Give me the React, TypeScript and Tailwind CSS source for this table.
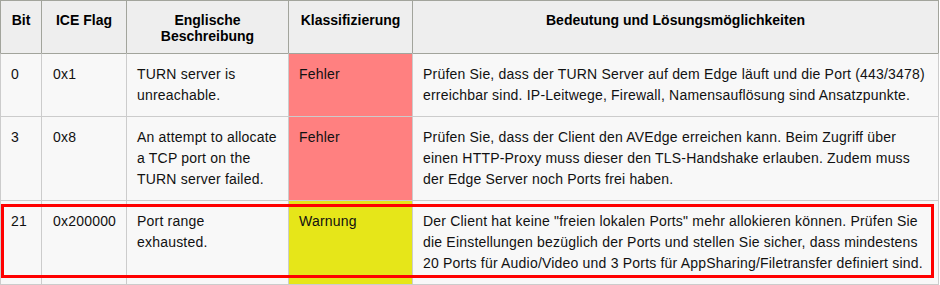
import React from "react";

const rows = [
  {
    bit: "0",
    flag: "0x1",
    en: "TURN server is unreachable.",
    cls: "Fehler",
    color: "bg-[#ff8080]",
    desc: "Prüfen Sie, dass der TURN Server auf dem Edge läuft und die Port (443/3478) erreichbar sind. IP-Leitwege, Firewall, Namensauflösung sind Ansatzpunkte.",
  },
  {
    bit: "3",
    flag: "0x8",
    en: "An attempt to allocate a TCP port on the TURN server failed.",
    cls: "Fehler",
    color: "bg-[#ff8080]",
    desc: "Prüfen Sie, dass der Client den AVEdge erreichen kann. Beim Zugriff über einen HTTP-Proxy muss dieser den TLS-Handshake erlauben. Zudem muss der Edge Server noch Ports frei haben.",
  },
  {
    bit: "21",
    flag: "0x200000",
    en: "Port range exhausted.",
    cls: "Warnung",
    color: "bg-[#e6e619]",
    desc: 'Der Client hat keine "freien lokalen Ports" mehr allokieren können. Prüfen Sie die Einstellungen bezüglich der Ports und stellen Sie sicher, dass mindestens 20 Ports für Audio/Video und 3 Ports für AppSharing/Filetransfer definiert sind.',
  },
];

const headers = ["Bit", "ICE Flag", "Englische Beschreibung", "Klassifizierung", "Bedeutung und Lösungsmöglichkeiten"];

export default function App() {
  return (
    <div className="relative w-[940px] h-[285px] bg-white overflow-hidden" style={{ fontFamily: '"Liberation Sans", Arial, sans-serif' }}>
      <div className="grid grid-cols-[41px_85px_162px_124px_527px] text-[14px] text-[#111]">
        {headers.map((h, i) => (
          <div
            key={h}
            className={`border-l border-t border-[#a2a49c] bg-[#eeeeee] pt-[11px] pb-[9px] px-[10px] text-center font-bold leading-[16px] text-black ${i === 4 ? "border-r" : ""}`}
          >
            {h}
          </div>
        ))}
        {rows.map((r, ri) => {
          const top = ri === 0 ? "border-t-[#a2a49c]" : "border-t-[#cccccc]";
          const bottom = ri === rows.length - 1 ? "border-b" : "";
          const base = `border-l border-t border-[#cccccc] ${top} ${bottom} pt-[10px] pb-[10px] px-[10px] leading-[21px] tracking-[0.2px]`;
          return (
            <React.Fragment key={r.bit}>
              <div className={`${base} bg-[#f8f8f8]`}>{r.bit}</div>
              <div className={`${base} bg-[#f8f8f8] pl-[11px]`}>{r.flag}</div>
              <div className={`${base} bg-[#f8f8f8]`}>{r.en}</div>
              <div className={`${base} ${r.color}`}>{r.cls}</div>
              <div className={`${base} bg-[#f8f8f8] border-r pl-[10px] pr-[8px]`}>{r.desc}</div>
            </React.Fragment>
          );
        })}
      </div>
      <div className="absolute left-[1px] top-[204px] w-[933px] h-[74px] border-[3px] border-[#ff0000] pointer-events-none" />
    </div>
  );
}
